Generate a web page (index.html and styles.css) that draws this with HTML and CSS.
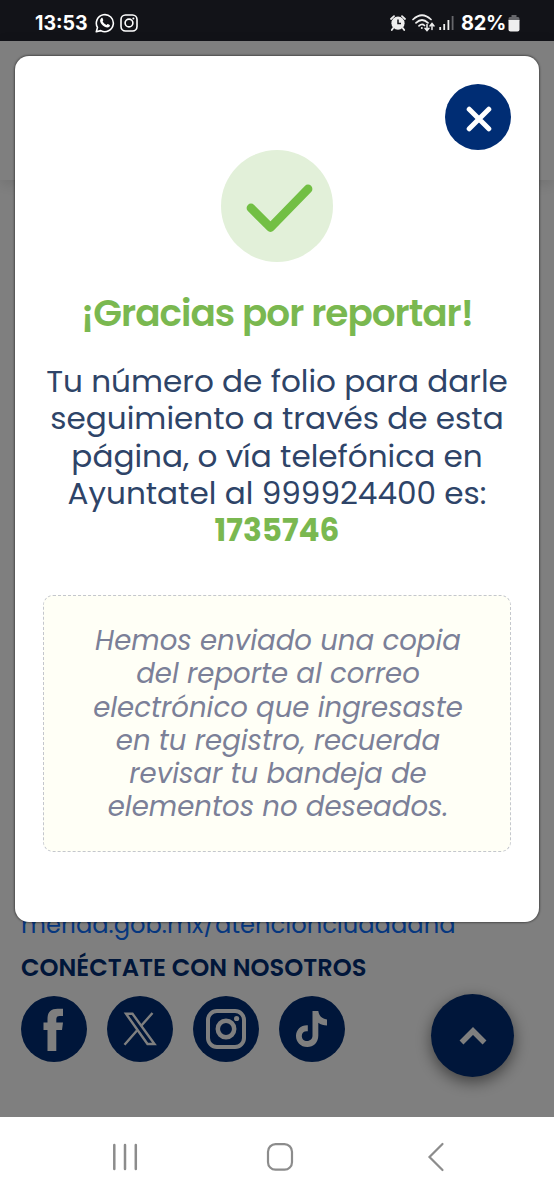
FILE: index.html
```html
<!DOCTYPE html>
<html lang="es">
<head>
    <meta charset="UTF-8">
    <meta name="viewport" content="width=device-width, initial-scale=1.0">
    <title>Reporte enviado</title>
    <link rel="stylesheet" href="styles.css">
</head>
<body>
    <div class="status-bar">
        <div class="status-left">
            <span class="clock">13:53</span>
            <svg class="whatsapp" width="20" height="20" viewBox="0 0 20 20">
                <path d="M1.3 18.7 2.5 14.4A8.5 8.5 0 1 1 5.8 17.6Z" fill="none" stroke="#fff" stroke-width="1.6" stroke-linejoin="round"/>
                <path d="M6.2 5.2c.5-.5 1.2-.4 1.4.1l.7 1.6c.1.5-.5 1-.7 1.4.8 1.7 2.2 3 3.9 3.7.5-.2.9-1 1.4-.9l1.8.9c.4.3.2 1.2-.3 1.7-1.2 1.2-3.2.9-5.2-.2-1.9-1.1-3.5-2.9-4-4.9-.3-1.4.1-2.7 1-3.4z" fill="#fff"/>
            </svg>
            <svg class="instagram" width="18" height="18" viewBox="0 0 18 18" fill="none" stroke="#fff" stroke-width="1.6">
                <rect x="1" y="1" width="16" height="16" rx="4.5"/>
                <circle cx="9" cy="9" r="3.9"/>
                <circle cx="13.4" cy="4.5" r="1" fill="#fff" stroke="none"/>
            </svg>
        </div>
        <div class="status-right">
            <svg class="alarm" width="16" height="16" viewBox="0 0 16 16">
                <path d="M1 4 4 1.2M15 4 12 1.2M3.2 13 1.8 15M12.8 13 14.2 15" stroke="#eee" stroke-width="1.8" stroke-linecap="round"/>
                <circle cx="8" cy="8.2" r="6.6" fill="#eee"/>
                <path d="M8 4.5V8.5H11" fill="none" stroke="#121318" stroke-width="1.5"/>
            </svg>
            <svg class="wifi" width="23" height="18" viewBox="0 0 23 18" fill="none" stroke="#eee" stroke-width="1.7" stroke-linecap="round">
                <path d="M1 5.5Q10 -3 19 5.5M4 8.8Q10 3.2 16 8.8M7 11.8Q10 9 12.5 11.5"/>
                <circle cx="9.8" cy="14" r="1" fill="#eee" stroke="none"/>
                <path d="M15 10.5V16M13 14.2 15 16.5 17 14.2M20 15.5V10M18 12 20 9.5 22 12" stroke-width="1.5"/>
            </svg>
            <svg class="signal" width="15" height="16" viewBox="0 0 15 16" stroke-width="1.8">
                <path d="M1.2 12V15M5.2 9V15M9.4 5V15" stroke="#eee"/>
                <path d="M13.6 1V15" stroke="#66676b"/>
            </svg>
            <span class="battery-text">82%</span>
            <svg class="battery" width="12" height="17" viewBox="0 0 12 17">
                <path d="M3.5 0H8.5V2H10Q11.5 2 11.5 4V6H.5V4Q.5 2 2 2H3.5Z" fill="#66676b"/>
                <path d="M.5 5H11.5V14.5Q11.5 16.5 9.5 16.5H2.5Q.5 16.5 .5 14.5Z" fill="#eee"/>
            </svg>
        </div>
    </div>

    <div class="viewport">
        <div class="page">
            <div class="header"></div>
            <div class="content"></div>
            <div class="footer">
                <a class="footer-link" href="#">merida.gob.mx/atencionciudadana</a>
                <h3 class="footer-title">CONÉCTATE CON NOSOTROS</h3>
                <div class="social">
                    <a class="social-link" href="#" aria-label="Facebook">
                        <svg width="66" height="66" viewBox="0 0 66 66">
                            <path d="M26.5 55V34H22.5V26.5H26.5V23C26.5 16 30 12.8 36.5 12.8H42V20H38.5C36 20 35.3 21.2 35.3 23.5V26.5H42L41 34H35.3V55Z" fill="#fff"/>
                        </svg>
                    </a>
                    <a class="social-link" href="#" aria-label="X">
                        <svg width="66" height="66" viewBox="0 0 66 66" fill="none" stroke="#fff" stroke-width="2.4">
                            <path d="M19 17.8H25.5L47.5 48H40.5Z"/>
                            <path d="M45.5 17 33.8 30.2M30 34.5 17.5 48.8"/>
                        </svg>
                    </a>
                    <a class="social-link" href="#" aria-label="Instagram">
                        <svg width="66" height="66" viewBox="0 0 66 66" fill="none" stroke="#fff">
                            <rect x="15" y="15" width="36" height="36" rx="9" stroke-width="4"/>
                            <circle cx="33" cy="33" r="8.2" stroke-width="4.5"/>
                            <circle cx="43.6" cy="22.5" r="2.6" fill="#fff" stroke="none"/>
                        </svg>
                    </a>
                    <a class="social-link" href="#" aria-label="TikTok">
                        <svg width="66" height="66" viewBox="0 0 66 66">
                            <path d="M33.5 15H39.3C39.7 19.5 43 23 48 23.5V29.4C44.6 29.4 41.8 28.5 39.3 26.7V39.5C39.3 46.5 34.5 51 28.3 51C21.5 51 17 46 17 40C17 33.5 22 28.8 28.8 29.2V35.3C25 34.8 22.8 37 22.8 39.9C22.8 42.8 25 45 28 45C31.3 45 33.5 42.7 33.5 39.5Z" fill="#fff"/>
                        </svg>
                    </a>
                </div>
            </div>
            <a class="to-top" href="#" aria-label="Subir">
                <svg width="28" height="20" viewBox="0 0 28 20">
                    <path d="M2.5 16.5 14 5 25.5 16.5" fill="none" stroke="#fff" stroke-width="5.5"/>
                </svg>
            </a>
        </div>

        <div class="overlay">
            <div class="modal">
                <button class="close" aria-label="Cerrar">
                    <svg width="26" height="26" viewBox="0 0 26 26">
                        <path d="M3.2 3.2 22.8 22.8M22.8 3.2 3.2 22.8" stroke="#fff" stroke-width="5" stroke-linecap="round"/>
                    </svg>
                </button>
                <div class="check">
                    <svg width="112" height="112" viewBox="0 0 112 112">
                        <path d="M30 58 49.5 77.5 87 39" fill="none" stroke="#72bf44" stroke-width="8.8" stroke-linecap="round" stroke-linejoin="round"/>
                    </svg>
                </div>
                <h1 class="title">¡Gracias por reportar!</h1>
                <p class="message">
                    Tu número de folio para darle<br>
                    seguimiento a través de esta<br>
                    página, o vía telefónica en<br>
                    Ayuntatel al 999924400 es:<br>
                    <strong class="folio">1735746</strong>
                </p>
                <p class="note">
                    Hemos enviado una copia<br>
                    del reporte al correo<br>
                    electrónico que ingresaste<br>
                    en tu registro, recuerda<br>
                    revisar tu bandeja de<br>
                    elementos no deseados.
                </p>
            </div>
        </div>
    </div>

    <div class="nav-bar">
        <svg width="26" height="30" viewBox="0 0 26 30">
            <path d="M2.3 3V27M13 3V27M23.8 3V27" stroke="#8c8c8c" stroke-width="2.5" stroke-linecap="round"/>
        </svg>
        <svg class="nav-home" width="28" height="30" viewBox="0 0 28 30">
            <rect x="2" y="2.2" width="24" height="25.5" rx="7.5" fill="none" stroke="#8c8c8c" stroke-width="2.2"/>
        </svg>
        <svg width="18" height="30" viewBox="0 0 18 30">
            <path d="M15.5 2 2.5 15 15.5 28" fill="none" stroke="#8c8c8c" stroke-width="2.2" stroke-linecap="round"/>
        </svg>
    </div>
</body>
</html>
```
FILE: styles.css
```css
* {
    box-sizing: border-box;
}
body {
    display: flex;
    flex-direction: column;
    height: 1200px;
    margin: 0;
    overflow: hidden;
    font-family: Poppins, Inter, sans-serif;
    background-color: #fff;
}
svg {
    display: block;
}

/* phone status bar */
.status-bar {
    display: flex;
    justify-content: space-between;
    height: 41px;
    padding: 5px 34px 0 35px;
    background-color: #121318;
    color: #fff;
    font-family: Inter, Roboto, sans-serif;
    font-size: 20px;
    font-weight: 700;
}
.status-left,
.status-right {
    display: flex;
    align-items: center;
}
.clock {
    width: 52px;
    font-size: 19.5px;
}
.whatsapp {
    margin-left: 8px;
}
.instagram {
    margin-left: 5px;
}
.wifi {
    margin-left: 6px;
}
.signal {
    margin-left: 4px;
}
.battery-text {
    margin-left: 7px;
    letter-spacing: -0.3px;
}
.battery {
    margin-left: 2px;
}

/* page behind the modal */
.viewport {
    position: relative;
    height: 1076px;
}
.page {
    display: flex;
    flex-direction: column;
    height: 100%;
}
.header {
    height: 139px;
    background-color: #fff;
    box-shadow: 0 4px 14px rgba(0, 0, 0, 0.12);
}
.content {
    flex: 1;
}
.footer {
    height: 206px;
    padding: 0 21px;
}
.footer-link {
    display: block;
    height: 38px;
    line-height: 27px;
    color: #0d6efd;
    font-size: 24.2px;
    text-decoration: none;
    white-space: nowrap;
}
.footer-title {
    height: 47px;
    margin: 0;
    line-height: 37px;
    color: #002d74;
    font-size: 24.2px;
    font-weight: 600;
    white-space: nowrap;
}
.social {
    display: flex;
    gap: 20px;
}
.social-link {
    width: 66px;
    height: 66px;
    border-radius: 50%;
    background-color: #002d74;
}
.to-top {
    position: absolute;
    right: 40px;
    bottom: 40px;
    display: flex;
    align-items: center;
    justify-content: center;
    width: 83px;
    height: 83px;
    border-radius: 50%;
    background-color: #002d74;
    box-shadow: 0 5px 16px rgba(0, 0, 0, 0.5);
}

/* modal */
.overlay {
    position: absolute;
    inset: 0;
    padding: 15px;
    background-color: rgba(0, 0, 0, 0.5);
}
.modal {
    display: flex;
    flex-direction: column;
    height: 866px;
    padding: 28px;
    border-radius: 14px;
    background-color: #fff;
    box-shadow: 0 0 2px 1px rgba(0, 0, 0, 0.4);
    text-align: center;
}
.close {
    display: flex;
    align-items: center;
    justify-content: center;
    align-self: flex-end;
    width: 66px;
    height: 66px;
    padding: 4px 0 0 2px;
    border: 0;
    border-radius: 50%;
    background-color: #002d74;
}
.check {
    align-self: center;
    width: 112px;
    height: 112px;
    border-radius: 50%;
    background-color: #e2f0d9;
}
.title {
    margin: 26px 0 0;
    line-height: 50px;
    color: #7ab850;
    font-size: 37.4px;
    font-weight: 600;
    letter-spacing: -1px;
    white-space: nowrap;
}
.message {
    margin: 25px 0 0;
    line-height: 37.3px;
    color: #2e4468;
    font-size: 31.1px;
}
.folio {
    color: #7ab850;
    font-weight: 700;
}
.note {
    height: 257px;
    margin: 45.5px 0 0;
    padding: 28px 0 0 2px;
    border: 1px dashed #c4c7cd;
    border-radius: 10px;
    background-color: #fffff6;
    line-height: 33.3px;
    color: #7b8098;
    font-size: 27.6px;
    font-style: italic;
}

/* android navigation bar */
.nav-bar {
    display: flex;
    align-items: center;
    justify-content: space-between;
    height: 83px;
    padding: 0 109px 4px 112px;
    background-color: #fff;
}
.nav-home {
    margin-right: 5px;
}
```
